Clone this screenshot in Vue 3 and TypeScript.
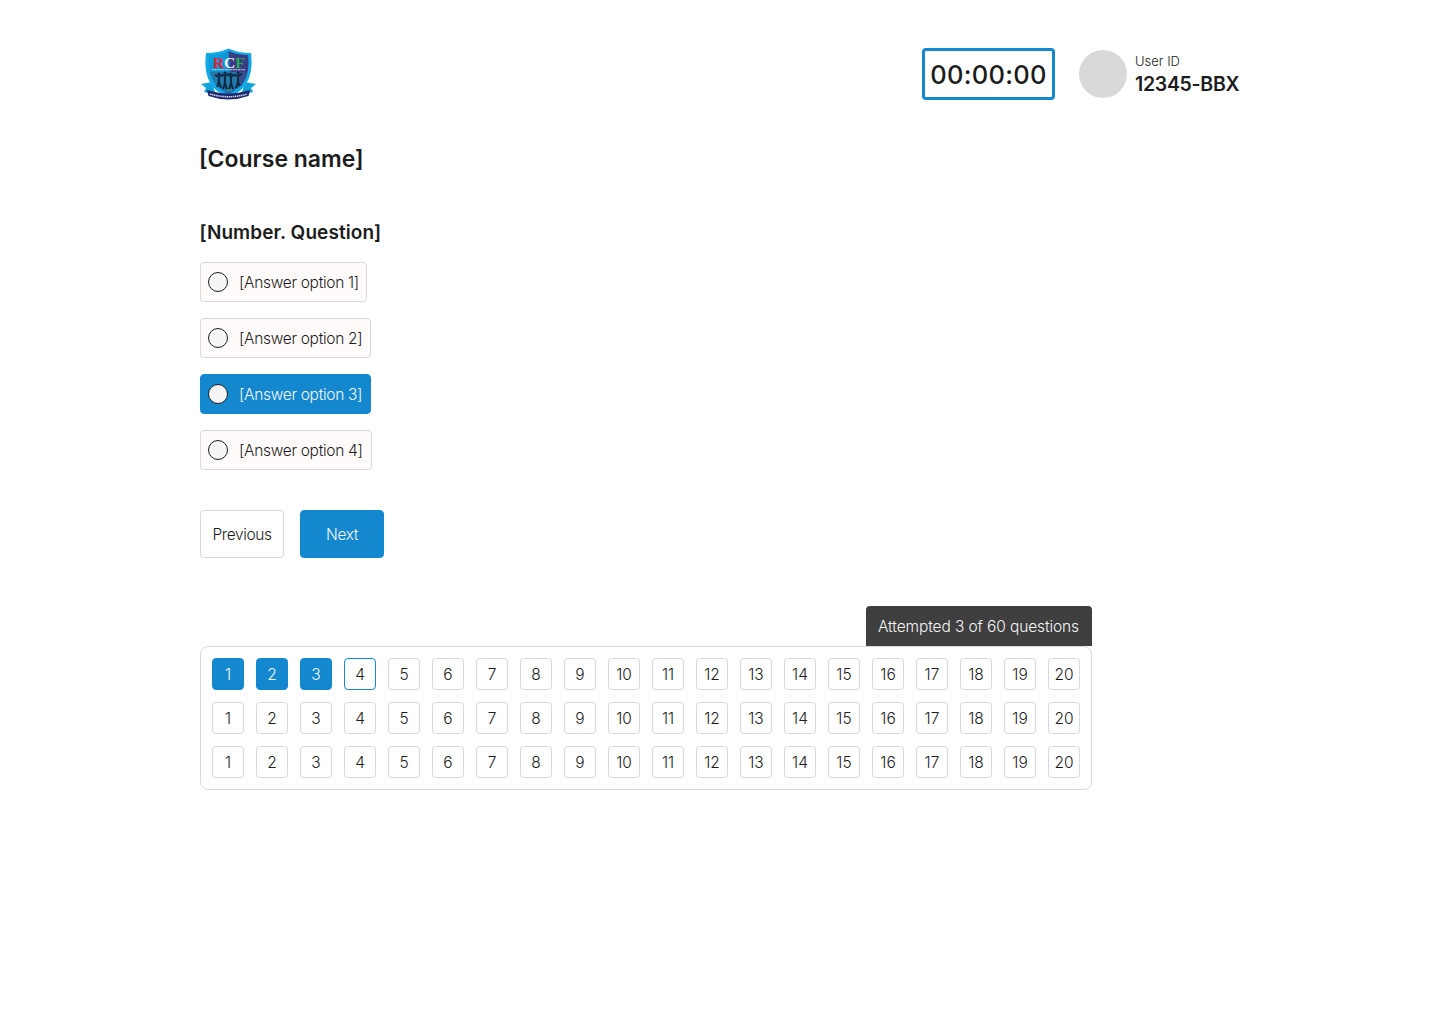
<script setup lang="ts">
import { ref } from 'vue'

interface Option {
  label: string
  width: number
}

const options: Option[] = [
  { label: '[Answer option 1]', width: 167 },
  { label: '[Answer option 2]', width: 171 },
  { label: '[Answer option 3]', width: 171 },
  { label: '[Answer option 4]', width: 172 },
]
const selected = ref(2)
const rows = [0, 1, 2]
const attempted = 3

function cellClass(row: number, n: number) {
  return {
    done: row === 0 && n <= attempted,
    current: row === 0 && n === attempted + 1,
  }
}
</script>

<template>
  <main class="page">
    <header class="top">
      <svg class="logo" width="57" height="53" viewBox="0 0 57 53">
        <defs>
          <linearGradient id="shield" x1="0" y1="0" x2="1" y2="1">
            <stop offset="0" stop-color="#08a4e4" />
            <stop offset="0.5" stop-color="#168ac9" />
            <stop offset="1" stop-color="#174b91" />
          </linearGradient>
        </defs>
        <path d="M1 36 L12 34 L15 44 L8 45 L4 44 L6 40 Z M56 36 L45 34 L42 44 L49 45 L53 44 L51 40 Z" fill="#14a4dc" />
        <path d="M28.500 0.500 C22 3.500 14 5 6 5 C4 22 6 40 28.500 50 C51 40 53 22 51 5 C43 5 35 3.500 28.500 0.500 Z" fill="#14a9e5" />
        <path d="M28.500 3 C22 6 15 7 9 7 C7 23 10 37 28.500 46 C47 37 50 23 48 7 C42 7 35 6 28.500 3 Z" fill="url(#shield)" />
        <path d="M28.500 3 C35 6 42 7 48 7 C49 20 48 29 41 38 L30 23 Z" fill="#3b3d83" />
        <path d="M10 24 H47 C45 33 39 39 28.500 44 C18 39 12 33 10 24 Z" fill="#2479a9" />
        <path d="M38 24 H47 C45 33 42 37 37 40 Z" fill="#34508f" />
        <g fill="#102c4b">
          <circle cx="19" cy="26" r="1.500" />
          <circle cx="25" cy="25" r="1.600" />
          <circle cx="31" cy="26" r="1.600" />
          <circle cx="38" cy="25" r="1.600" />
        </g>
        <path d="M15 27 L19 29 L22 27 L25 28 L28 26 L31 29 L34 27 L38 28 L42 26 M19 28 V34 L17 39 M19 34 L21 40 M25 28 V35 L23 41 M25 35 L27 42 M31 28 V35 L29 42 M31 35 L33 41 M38 28 V34 L36 40 M38 34 L40 38" fill="none" stroke="#102c4b" stroke-width="2.100" />
        <text x="28.800" y="20" text-anchor="middle" class="logo-name"><tspan fill="#e52330">R</tspan><tspan fill="#f3f7f5">C</tspan><tspan fill="#27a85b">F</tspan></text>
        <path d="M12 21.700 H45" stroke="#9dbdd8" stroke-width="1.200" stroke-dasharray="2 .6" />
        <path d="M26 42 H32" stroke="#4aa46b" stroke-width="1" />
        <path d="M7 42 Q28.500 49 50 42 L48.500 48 Q28.500 55 8.500 48 Z" fill="#1f286d" />
        <path d="M10 46 Q28.500 51.500 47 46" fill="none" stroke="#dce4f2" stroke-width="1.500" stroke-dasharray="1.400 .7" />
      </svg>
      <div class="session">
        <div class="timer"><span>00:00:00</span></div>
        <div class="user">
          <div class="avatar"></div>
          <div class="user-text">
            <div class="user-label">User ID</div>
            <div class="user-id">12345-BBX</div>
          </div>
        </div>
      </div>
    </header>

    <h1>[Course name]</h1>
    <h2>[Number. Question]</h2>

    <div class="options">
      <button
        v-for="(option, i) in options"
        :key="option.label"
        class="option"
        :class="{ selected: selected === i }"
        :style="{ width: option.width + 'px' }"
        @click="selected = i"
      >
        <span class="radio"></span>
        <span>{{ option.label }}</span>
      </button>
    </div>

    <div class="actions">
      <button class="action">Previous</button>
      <button class="action primary">Next</button>
    </div>

    <section class="progress">
      <div class="summary">Attempted 3 of 60 questions</div>
      <div class="grid">
        <template v-for="row in rows" :key="row">
          <button v-for="n in 20" :key="n" class="cell" :class="cellClass(row, n)">{{ n }}</button>
        </template>
      </div>
    </section>
  </main>
</template>

<style>
body {
  background: #fff;
}
</style>

<style scoped>
* {
  box-sizing: border-box;
}
.page {
  width: 1440px;
  height: 1024px;
  padding: 48px 200px 0;
  font-family: Inter, 'Liberation Sans', sans-serif;
  color: #1c1c1c;
  overflow: hidden;
}
button {
  font: inherit;
  color: inherit;
  padding: 0;
  margin: 0;
  white-space: nowrap;
}
.top {
  display: flex;
  justify-content: space-between;
  height: 52px;
}
.logo {
  display: block;
}
.logo-name {
  font: 700 15.500px 'Liberation Serif', serif;
}
.session {
  display: flex;
  gap: 24px;
}
.timer {
  width: 133px;
  height: 52px;
  padding-top: 1px;
  border: 3px solid #1488cf;
  border-radius: 4px;
  display: flex;
  align-items: center;
  justify-content: center;
  font-size: 25.500px;
  font-weight: 500;
  letter-spacing: 0.3px;
  white-space: nowrap;
}
.user {
  display: flex;
  align-items: center;
  gap: 8px;
  width: 161px;
}
.avatar {
  width: 48px;
  height: 48px;
  border-radius: 50%;
  background: #d9d9d9;
  flex: none;
}
.user-text {
  padding-top: 2px;
  white-space: nowrap;
}
.user-label {
  font-size: 13px;
  font-weight: 300;
  line-height: 19px;
}
.user-id {
  font-size: 19.500px;
  font-weight: 600;
  line-height: 27px;
  letter-spacing: -0.3px;
}
h1 {
  margin: 43px 0 0 -1px;
  font-size: 23px;
  font-weight: 600;
  line-height: 32px;
}
h2 {
  margin: 44px 0 0 -0.5px;
  font-size: 19px;
  font-weight: 600;
  line-height: 28px;
  letter-spacing: 0.08px;
}
.options {
  margin-top: 15px;
  display: flex;
  flex-direction: column;
  gap: 16px;
}
.option {
  height: 40px;
  padding-left: 7px;
  display: flex;
  align-items: center;
  gap: 11px;
  border: 1px solid #d9d9d9;
  border-radius: 4px;
  background: #fffbfb;
  font-size: 15.500px;
  font-weight: 300;
  letter-spacing: -0.31px;
}
.radio {
  width: 20px;
  height: 20px;
  border: 1px solid #1c1c1c;
  border-radius: 50%;
  background: #f5f5f5;
  flex: none;
}
.option.selected {
  background: #1488cf;
  border-color: #1488cf;
  color: #f5f5f5;
}
.actions {
  margin-top: 40px;
  display: flex;
  gap: 16px;
}
.action {
  width: 84px;
  height: 48px;
  border: 1px solid #d9d9d9;
  border-radius: 4px;
  background: #fff;
  font-size: 15.500px;
  font-weight: 300;
  letter-spacing: -0.4px;
}
.action.primary {
  background: #1488cf;
  border-color: #1488cf;
  color: #f5f5f5;
}
.progress {
  margin-top: 48px;
  width: 892px;
  display: flex;
  flex-direction: column;
  align-items: flex-end;
}
.summary {
  width: 226px;
  height: 40px;
  padding-left: 12px;
  border-radius: 4px 4px 0 0;
  background: #3f3f3f;
  color: #f5f5f5;
  font-size: 15.500px;
  font-weight: 300;
  line-height: 42px;
  letter-spacing: -0.11px;
  white-space: nowrap;
}
.grid {
  width: 892px;
  height: 144px;
  padding: 11px;
  border: 1px solid #d9d9d9;
  border-radius: 8px;
  display: grid;
  grid-template-columns: repeat(20, 32px);
  grid-auto-rows: 32px;
  gap: 12px;
}
.cell {
  border: 1px solid #d9d9d9;
  border-radius: 4px;
  background: #fff;
  font-size: 15.500px;
  font-weight: 300;
  text-align: center;
}
.cell.done {
  background: #1488cf;
  border-color: #1488cf;
  color: #f5f5f5;
}
.cell.current {
  border-color: #1488cf;
}
</style>
